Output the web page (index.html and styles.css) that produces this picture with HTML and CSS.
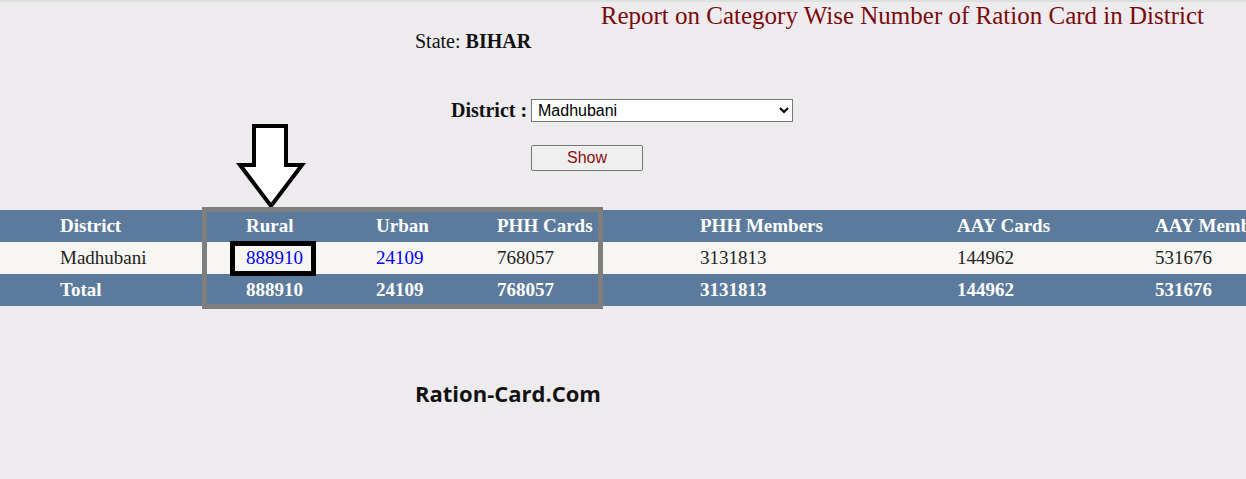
FILE: index.html
```html
<!DOCTYPE html>
<html>
<head>
<meta charset="utf-8">
<link rel="stylesheet" href="styles.css">
</head>
<body>
<div class="page">
  <div class="topstrip"></div>
  <h1 class="title">Report on Category Wise Number of Ration Card in District</h1>
  <div class="state">State: <b>BIHAR</b></div>
  <form class="filter">
    <label class="flabel">District :</label>
    <select class="fselect"><option>Madhubani</option></select>
    <button type="button" class="showbtn">Show</button>
  </form>
  <div class="tablewrap">
    <table class="report">
      <thead>
        <tr>
          <th class="c1">District</th>
          <th class="c2">Rural</th>
          <th class="c3">Urban</th>
          <th class="c4">PHH Cards</th>
          <th class="c5">PHH Members</th>
          <th class="c6">AAY Cards</th>
          <th class="c7">AAY Members</th>
        </tr>
      </thead>
      <tbody>
        <tr class="data">
          <td class="c1">Madhubani</td>
          <td><a class="lnk">888910</a></td>
          <td><a class="lnk">24109</a></td>
          <td>768057</td>
          <td>3131813</td>
          <td>144962</td>
          <td>531676</td>
        </tr>
        <tr class="total">
          <td class="c1">Total</td>
          <td>888910</td>
          <td>24109</td>
          <td>768057</td>
          <td>3131813</td>
          <td>144962</td>
          <td>531676</td>
        </tr>
      </tbody>
    </table>
  </div>
  <div class="brand">Ration-Card.Com</div>

  <svg class="annot" width="1246" height="479" viewBox="0 0 1246 479">
    <polygon class="arrow" points="254,126 286,126 286,165 302,165 271,206 240,165 254,165"/>
    <rect class="graybox" x="204.5" y="209.5" width="396" height="97"/>
    <rect class="blackbox" x="232.5" y="243.5" width="81" height="30"/>
  </svg>
</div>
</body>
</html>
```

FILE: styles.css
```css
html, body {
  margin: 0;
  padding: 0;
  background: #edebee;
}
.page {
  position: relative;
  width: 1246px;
  height: 479px;
  overflow: hidden;
  font-family: "Liberation Serif", "Times New Roman", serif;
  color: #111;
}
.topstrip {
  height: 2px;
  background: #dde1dc;
}
.title {
  margin: 0;
  font-weight: normal;
  font-size: 25px;
  line-height: 28px;
  color: #7b0a0a;
  text-align: right;
  padding-right: 42px;
}
.state {
  font-size: 20px;
  line-height: 22px;
  padding-left: 415px;
}
.filter {
  margin: 47px 0 0 0;
  padding-left: 451px;
  display: grid;
  grid-template-columns: 80px 262px;
  justify-content: start;
  row-gap: 23px;
  align-items: center;
}
.flabel {
  font-weight: bold;
  font-size: 20px;
  line-height: 23px;
  white-space: nowrap;
}
.fselect {
  width: 262px;
  height: 23px;
  font-family: "Liberation Sans", Arial, sans-serif;
  font-size: 16px;
  border: 1px solid #767676;
  border-radius: 0;
  background: #fff;
  color: #000;
  padding: 0 2px;
  margin: 0;
}
.showbtn {
  grid-column: 2;
  justify-self: start;
  width: 112px;
  height: 26px;
  font-family: "Liberation Sans", Arial, sans-serif;
  font-size: 16px;
  color: #8a0f0f;
  background: #efefef;
  border: 1px solid #767676;
  border-radius: 2px;
  margin: 0;
  padding: 0;
}
.tablewrap {
  margin-top: 39px;
  width: 1246px;
  overflow: hidden;
}
.report {
  border-collapse: collapse;
  table-layout: fixed;
  width: 1355px;
  font-size: 19px;
}
.report th, .report td {
  box-sizing: border-box;
  height: 32px;
  line-height: 32px;
  padding: 0;
  text-align: left;
  white-space: nowrap;
  vertical-align: top;
}
.report th {
  background: #5b7a9c;
  color: #fff;
  font-weight: bold;
}
.report .c1 { padding-left: 60px; }
.report th.c1 { width: 246px; }
.report th.c2 { width: 130px; }
.report th.c3 { width: 121px; }
.report th.c4 { width: 203px; }
.report th.c5 { width: 257px; }
.report th.c6 { width: 198px; }
.report th.c7 { width: 200px; }
.data td {
  background: #f7f6f3;
  color: #222;
}
.lnk {
  color: #0000ee;
  text-decoration: none;
}
.total td {
  background: #5b7a9c;
  color: #fff;
  font-weight: bold;
}
.brand {
  margin-top: 73px;
  padding-left: 415px;
  font-family: "Open Sans", "Noto Sans", sans-serif;
  font-weight: bold;
  font-size: 22px;
  line-height: 28px;
  color: #111;
}
.annot {
  position: absolute;
  left: 0;
  top: 0;
  pointer-events: none;
}
.arrow {
  fill: #fff;
  stroke: #000;
  stroke-width: 4;
  stroke-linejoin: miter;
  stroke-miterlimit: 3;
}
.graybox {
  fill: none;
  stroke: #7f7f7f;
  stroke-width: 5;
}
.blackbox {
  fill: none;
  stroke: #000;
  stroke-width: 5;
}
```
